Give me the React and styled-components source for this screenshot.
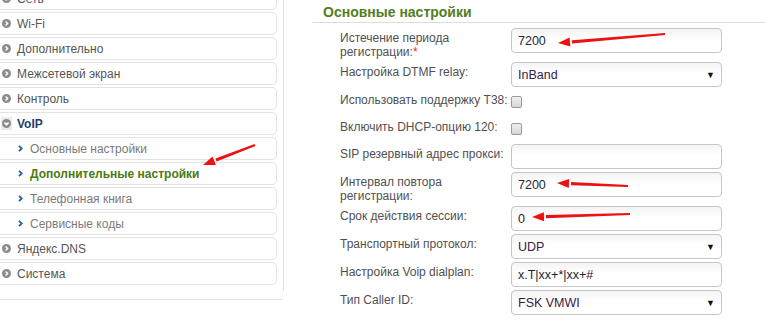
import React from "react";
import styled, { createGlobalStyle } from "styled-components";

const Global = createGlobalStyle`
  html, body { margin: 0; padding: 0; background: #fff; }
  body { font-family: "Liberation Sans", Arial, sans-serif; overflow: hidden; }
  * { box-sizing: border-box; }
`;

const Page = styled.div`
  position: relative;
  width: 765px;
  height: 320px;
  display: flex;
  align-items: flex-start;
  overflow: hidden;
`;

const LeftCol = styled.div`
  width: 284px;
  flex: none;
  display: flex;
  flex-direction: column;
`;

const Menu = styled.div`
  border-right: 1px solid #e2e2e2;
  padding-bottom: 4px;
  margin-top: -13px;
`;

const BottomLine = styled.div`
  margin-top: 8px;
  width: 283px;
  border-top: 1px solid #e2e2e2;
`;

const Item = styled.div`
  margin-left: -6px;
  width: 283px;
  height: 23px;
  margin-bottom: 2px;
  border: 1px solid #e3e3e3;
  border-radius: 5px;
  display: flex;
  align-items: center;
  padding-left: ${(p) => (p.$sub ? "23px" : "7px")};
  font-size: 12px;
  color: ${(p) => (p.$active ? "#4b7a12" : p.$open ? "#1f3d6e" : p.$sub ? "#7a7a7a" : "#555")};
  font-weight: ${(p) => (p.$active || p.$open ? "bold" : "normal")};
  white-space: nowrap;
`;

const IconWrap = styled.span`
  width: ${(p) => (p.$sub ? "5px" : "11px")};
  height: 13px;
  display: flex;
  align-items: center;
  justify-content: center;
  margin-right: ${(p) => (p.$sub ? "7px" : "5px")};
  margin-left: ${(p) => (p.$sub ? "0" : "-1px")};
  background: ${(p) => (p.$open ? "#ececec" : "transparent")};
`;

const Main = styled.div`
  flex: 1;
  display: flex;
  flex-direction: column;
`;

const Header = styled.div`
  margin-left: 28px;
  padding: 4px 0 1px 11px;
  line-height: 17px;
  font-size: 14px;
  font-weight: bold;
  color: #537e1e;
  border-bottom: 1px solid #dcdcdc;
`;

const Form = styled.div`
  margin-top: 5px;
  margin-left: 56px;
  display: flex;
  flex-direction: column;
  gap: 3px;
`;

const Row = styled.div`
  display: flex;
  align-items: flex-start;
  min-height: ${(p) => (p.$check ? "24px" : "25px")};
`;

const Label = styled.div`
  width: 171px;
  flex: none;
  padding-top: 3px;
  line-height: 14px;
  font-size: 12px;
  color: #505050;
  white-space: nowrap;
`;

const Req = styled.span`
  color: #e0302a;
`;

const Field = styled.div`
  width: 211px;
  height: 25px;
  border: 1px solid #c6c6c6;
  border-radius: 4px;
  background: linear-gradient(to bottom, #f4f4f4 0%, #ffffff 45%, #ffffff 100%);
  display: flex;
  align-items: center;
  justify-content: space-between;
  padding: 0 6px 0 6px;
  font-size: 12.5px;
  color: ${(p) => (p.$select ? "#3a1848" : "#1e2430")};
`;

const Arrow = styled.span`
  font-size: 9px;
  color: #111;
`;

const Check = styled.span`
  width: 11px;
  height: 12px;
  margin-top: 6px;
  border: 1px solid #9a9a9a;
  border-radius: 2px;
  background: linear-gradient(to bottom, #f0f0f0, #d6d6d6);
`;

const Overlay = styled.svg`
  position: absolute;
  left: 0;
  top: 0;
  pointer-events: none;
`;

function CircleIcon({ down }) {
  return (
    <svg width="9" height="9" viewBox="0 0 9 9">
      <circle cx="4.5" cy="4.5" r="4.5" fill="#8c8c8c" />
      {down ? (
        <path d="M2.4 3.6 L4.5 5.6 L6.6 3.6" stroke="#fff" strokeWidth="1.5" fill="none" />
      ) : (
        <path d="M3.6 2.4 L5.6 4.5 L3.6 6.6" stroke="#fff" strokeWidth="1.5" fill="none" />
      )}
    </svg>
  );
}

function SubIcon() {
  return (
    <svg width="5" height="7" viewBox="0 0 5 7">
      <path d="M1 0.8 L3.8 3.5 L1 6.2" stroke="#1f5fa8" strokeWidth="1.8" fill="none" />
    </svg>
  );
}

function RedArrow({ from, to }) {
  const dx = to[0] - from[0];
  const dy = to[1] - from[1];
  const len = Math.hypot(dx, dy);
  const ux = dx / len;
  const uy = dy / len;
  const px = -uy;
  const py = ux;
  const hl = 14;
  const hw = 4.5;
  const bx = to[0] - ux * hl;
  const by = to[1] - uy * hl;
  const shaft = [
    [from[0] + px * 1.1, from[1] + py * 1.1],
    [bx + px * 1.6, by + py * 1.6],
    [bx - px * 1.6, by - py * 1.6],
    [from[0] - px * 1.1, from[1] - py * 1.1],
  ];
  const head = [
    [to[0], to[1]],
    [bx + px * hw + ux * 2, by + py * hw + uy * 2],
    [bx - px * hw + ux * 2, by - py * hw + uy * 2],
  ];
  const s = (pts) => pts.map((p) => p.join(",")).join(" ");
  return (
    <g fill="#ee1111">
      <polygon points={s(shaft)} />
      <polygon points={s(head)} />
    </g>
  );
}

const menu = [
  { t: "Сеть" },
  { t: "Wi-Fi" },
  { t: "Дополнительно" },
  { t: "Межсетевой экран" },
  { t: "Контроль" },
  { t: "VoIP", open: true },
  { t: "Основные настройки", sub: true },
  { t: "Дополнительные настройки", sub: true, active: true },
  { t: "Телефонная книга", sub: true },
  { t: "Сервисные коды", sub: true },
  { t: "Яндекс.DNS" },
  { t: "Система" },
];

export default function App() {
  return (
    <>
      <Global />
      <Page>
        <LeftCol>
          <Menu>
            {menu.map((m) => (
              <Item key={m.t} $sub={m.sub} $active={m.active} $open={m.open}>
                <IconWrap $sub={m.sub} $open={m.open}>
                  {m.sub ? <SubIcon /> : <CircleIcon down={m.open} />}
                </IconWrap>
                {m.t}
              </Item>
            ))}
          </Menu>
          <BottomLine />
        </LeftCol>
        <Main>
          <Header>Основные настройки</Header>
          <Form>
            <Row>
              <Label>
                Истечение периода
                <br />
                регистрации:<Req>*</Req>
              </Label>
              <Field>7200</Field>
            </Row>
            <Row>
              <Label>Настройка DTMF relay:</Label>
              <Field $select>
                InBand<Arrow>▼</Arrow>
              </Field>
            </Row>
            <Row $check>
              <Label>Использовать поддержку T38:</Label>
              <Check />
            </Row>
            <Row $check>
              <Label>Включить DHCP-опцию 120:</Label>
              <Check />
            </Row>
            <Row>
              <Label>SIP резервный адрес прокси:</Label>
              <Field />
            </Row>
            <Row>
              <Label>
                Интервал повтора
                <br />
                регистрации:
              </Label>
              <Field>7200</Field>
            </Row>
            <Row>
              <Label>Срок действия сессии:</Label>
              <Field>0</Field>
            </Row>
            <Row>
              <Label>Транспортный протокол:</Label>
              <Field $select>
                UDP<Arrow>▼</Arrow>
              </Field>
            </Row>
            <Row>
              <Label>Настройка Voip dialplan:</Label>
              <Field>x.T|xx+*|xx+#</Field>
            </Row>
            <Row>
              <Label>Тип Caller ID:</Label>
              <Field $select>
                FSK VMWI<Arrow>▼</Arrow>
              </Field>
            </Row>
          </Form>
        </Main>
        <Overlay width="765" height="320" viewBox="0 0 765 320">
          <RedArrow from={[665, 34]} to={[558, 43]} />
          <RedArrow from={[255, 145]} to={[203, 165]} />
          <RedArrow from={[628, 186]} to={[557, 183]} />
          <RedArrow from={[630, 214]} to={[532, 217]} />
        </Overlay>
      </Page>
    </>
  );
}
